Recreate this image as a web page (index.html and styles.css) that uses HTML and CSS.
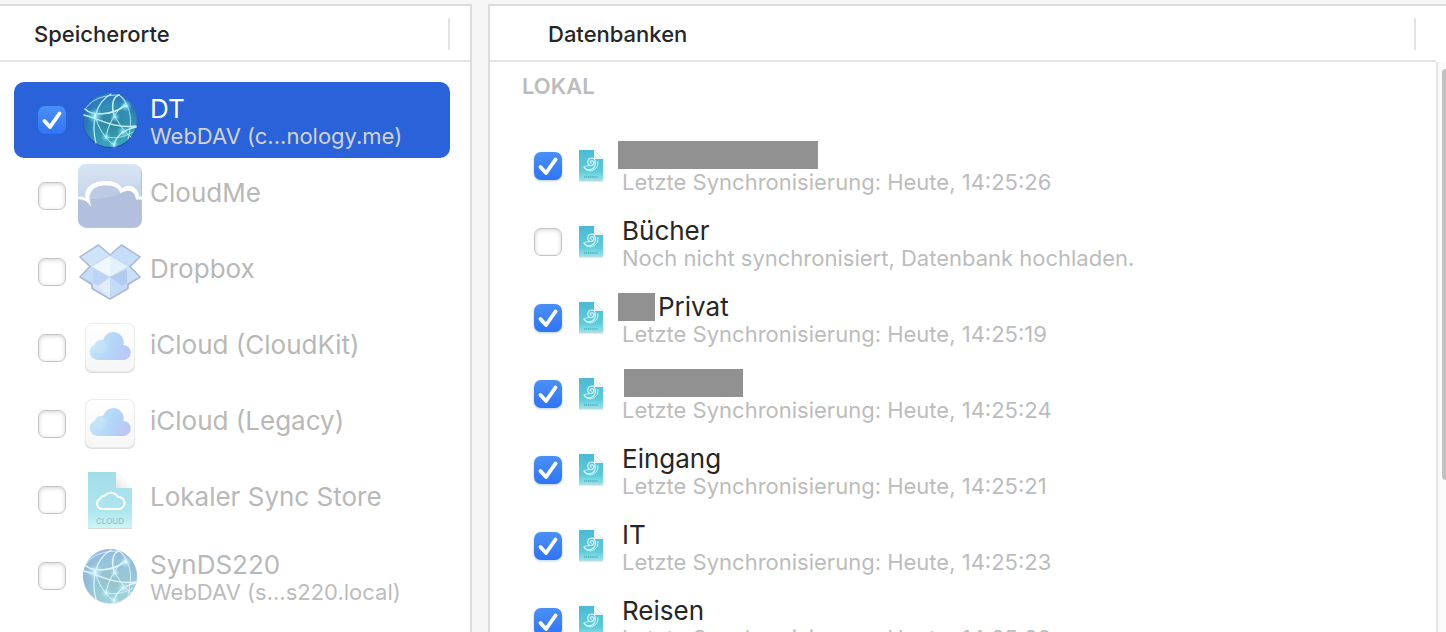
FILE: index.html
```
<!DOCTYPE html>
<html lang="de">
<head>
    <meta charset="UTF-8">
    <meta name="viewport" content="width=device-width, initial-scale=1.0">
    <title>Speicherorte</title>
    <link rel="stylesheet" href="styles.css">
</head>
<body>
    <svg class="defs" width="0" height="0" aria-hidden="true">
        <defs>
            <radialGradient id="ball" cx="55%" cy="60%" r="60%">
                <stop offset="0" stop-color="#2f8096"/>
                <stop offset="0.6" stop-color="#318fb4"/>
                <stop offset="1" stop-color="#2264ac"/>
            </radialGradient>
            <linearGradient id="ball-shade" x1="0" y1="0" x2="0.3" y2="1">
                <stop offset="0" stop-color="#2f7fe0" stop-opacity="0.7"/>
                <stop offset="0.5" stop-color="#3aa0c8" stop-opacity="0"/>
                <stop offset="1" stop-color="#48c4bc" stop-opacity="0.4"/>
            </linearGradient>
            <radialGradient id="glow">
                <stop offset="0" stop-color="#f2fdff" stop-opacity="1"/>
                <stop offset="0.35" stop-color="#8fe6ff" stop-opacity="0.6"/>
                <stop offset="1" stop-color="#6fd8ff" stop-opacity="0"/>
            </radialGradient>
            <linearGradient id="sky" x1="0" y1="0" x2="0" y2="1">
                <stop offset="0" stop-color="#d7e4f3"/>
                <stop offset="1" stop-color="#b5c7e2"/>
            </linearGradient>
            <linearGradient id="cloud-fill" x1="0" y1="0" x2="1" y2="0.3">
                <stop offset="0" stop-color="#c8ebf8"/>
                <stop offset="0.6" stop-color="#b3d7f8"/>
                <stop offset="1" stop-color="#b9c8f6"/>
            </linearGradient>
            <linearGradient id="tile" x1="0" y1="0" x2="0" y2="1">
                <stop offset="0" stop-color="#ffffff"/>
                <stop offset="1" stop-color="#f6f6f6"/>
            </linearGradient>
            <linearGradient id="store-fill" x1="0" y1="0" x2="0" y2="1">
                <stop offset="0" stop-color="#a4dbe9"/>
                <stop offset="0.7" stop-color="#aee6ee"/>
                <stop offset="1" stop-color="#cdf5f6"/>
            </linearGradient>
            <linearGradient id="db-fill" x1="0" y1="0" x2="0" y2="1">
                <stop offset="0" stop-color="#4cb9d5"/>
                <stop offset="0.7" stop-color="#5ccbdc"/>
                <stop offset="1" stop-color="#93e6ea"/>
            </linearGradient>
            <linearGradient id="fold" x1="0" y1="1" x2="1" y2="0">
                <stop offset="0" stop-color="#e4e4e4"/>
                <stop offset="0.5" stop-color="#fbfbfb"/>
            </linearGradient>

            <symbol id="globe" viewBox="0 0 64 64">
                <circle cx="32" cy="33" r="27" fill="#000" opacity="0.25"/>
                <circle cx="32" cy="32" r="27" fill="url(#ball)"/>
                <circle cx="32" cy="32" r="27" fill="url(#ball-shade)"/>
                <g fill="none" stroke="#c4f2fb" stroke-linecap="round">
                    <path d="M7 21C14 28 34 28 48 17" stroke-width="1.6"/>
                    <path d="M6 27C22 31 36 41 58 38" stroke-width="1.4"/>
                    <path d="M33 6C17 15 13 36 18 55" stroke-width="1.2"/>
                    <path d="M17 27C20 40 27 51 37 58" stroke-width="1"/>
                    <path d="M48 15C38 22 29 38 28 50" stroke-width="1"/>
                    <path d="M37 29C42 36 44 42 53 49" stroke-width="1"/>
                    <path d="M37 29C33 20 34 9 41 7" stroke-width="1.5"/>
                    <path d="M41 7C53 18 55 32 50 51" stroke-width="0.8"/>
                    <path d="M58 39C45 42 37 49 36 58" stroke-width="1.6"/>
                    <path d="M8 20C15 10 27 7 41 7" stroke-width="0.8"/>
                    <path d="M28 49C38 51 47 49 55 44" stroke-width="0.8"/>
                    <path d="M41 7C45 9 48 13 49 19" stroke-width="0.8"/>
                </g>
                <circle cx="17" cy="28" r="8" fill="url(#glow)"/>
                <circle cx="37" cy="29" r="5" fill="url(#glow)"/>
                <circle cx="48" cy="18" r="6" fill="url(#glow)"/>
                <circle cx="45" cy="44" r="6" fill="url(#glow)"/>
                <circle cx="28" cy="49" r="5" fill="url(#glow)"/>
                <circle cx="36" cy="56" r="5" fill="url(#glow)"/>
            </symbol>

            <symbol id="cloudme" viewBox="0 0 64 64">
                <rect x="1" y="1" width="63" height="63" rx="8" fill="#c4c4c8"/>
                <rect width="63" height="63" rx="8" fill="url(#sky)"/>
                <path d="M0 36C6 36 10 38 13 42C11 22 20 18 28 18C36 18 41 21 43 27C50 21 58 25 59 34L63 34V55Q63 63 55 63H8Q0 63 0 55Z" fill="#b2c0de"/>
                <path d="M9 35Q37 37 63 18V34L59 34C58 25 50 21 43 27C41 21 36 18 28 18C16 18 8 24 9 35Z" fill="#c5d4ea" opacity="0.5"/>
                <path d="M0 35C6 35 9 37 13.500 43C12 38 10.500 34 12 30C14 24 20 21.500 28 21.500C36 21.500 41 24 42.500 29.500C50 24 57 27 58 35.500H64V32.500H61C60 22 50 19 44 24.500C41 19 36 17 28 17C15 17 6 23 7.500 34C5.500 33 3 32.500 0 33Z" fill="#fff"/>
            </symbol>

            <symbol id="dropbox" viewBox="0 0 64 64">
                <path d="M20.500 5L32 15L43.500 5L62 17L52 26.500L62 37L50 44.500V48.500L32 59L14 48.500V44.500L2 37L12 26.500L2 17Z" fill="#c2dbf6" stroke="#a6b7d6" stroke-width="1.600" stroke-linejoin="round"/>
                <path d="M20.500 6L31 15L13 26L3 17Z" fill="#cfe3f9"/>
                <path d="M43.500 6L33 15L51 26L61 17Z" fill="#c6ddf7"/>
                <path d="M13 27L31 37L20 45L3 37Z" fill="#c4dcf8"/>
                <path d="M51 27L33 37L44 45L61 37Z" fill="#cbdff7"/>
                <path d="M32 16L50 26.500L32 37Z" fill="#e4f0fc"/>
                <path d="M32 16L14 26.500L32 37Z" fill="#f0f7fe"/>
                <path d="M15 29L32 37V58L15 48Z" fill="#d4e5fa"/>
                <path d="M49 29L32 37V58L49 48Z" fill="#c5daf6"/>
                <path d="M15 29L32 37L20 46L15 43Z" fill="#bcd4f5"/>
                <path d="M49 29L32 37L44 46L49 43Z" fill="#b1cbf1"/>
                <path d="M32 38L20 46L32 58Z" fill="#e2eefc"/>
            </symbol>

            <symbol id="icloud" viewBox="0 0 64 64">
                <rect x="7" y="8" width="50" height="49" rx="7" fill="#dcdcdc"/>
                <rect x="7.500" y="7.500" width="49" height="48" rx="7" fill="url(#tile)" stroke="#ebebeb"/>
                <path d="M20 44A8 8 0 0 1 17 28.500A7 7 0 0 1 25 24A10.500 10.500 0 0 1 45.500 29A7.500 7.500 0 0 1 45 44Z" fill="url(#cloud-fill)"/>
                <circle cx="22" cy="31" r="7" fill="#d4f0fa" opacity="0.3"/>
            </symbol>

            <symbol id="store" viewBox="0 0 64 64">
                <path d="M10 6H38L54 22V61H10Z" fill="#d9dcdd"/>
                <path d="M10 4H38L54 20V58Q54 60 52 60H12Q10 60 10 58Z" fill="url(#store-fill)"/>
                <path d="M38 4L54 20H38Z" fill="url(#fold)"/>
                <path d="M24 41A5.500 5.500 0 0 1 22.500 30.500A5 5 0 0 1 27 27.500A8 8 0 0 1 40 29A6 6 0 0 1 41 41Z" fill="none" stroke="#fff" stroke-width="2" stroke-linejoin="round"/>
                <text x="32" y="55.500" text-anchor="middle" class="store-text">CLOUD</text>
            </symbol>

            <symbol id="database" viewBox="0 0 24 32">
                <path d="M0 1H15L24 9V31.500H0Z" fill="#cdd5d7"/>
                <path d="M0 0H15L24 9V29.500Q24 30.500 23 30.500H1Q0 30.500 0 29.500Z" fill="url(#db-fill)"/>
                <path d="M15 0L24 9H15Z" fill="url(#fold)"/>
                <g fill="none" stroke="#dff8fb" stroke-linecap="round">
                    <path d="M5 17C6 19.500 9.500 20.500 12 19.500C18 17.500 17.500 8 12.500 8C8 8.500 7.500 14.500 11.500 15.500C15 16 16 11 13 10.500C11 10.500 10.800 13 12.500 13" stroke-width="1.200"/>
                    <path d="M5 17C7 15.500 8.500 16 11.500 15.500" stroke-width="0.800"/>
                    <path d="M7 19.500C12 23.500 20 19 19 11.500" stroke-width="0.900"/>
                </g>
                <path d="M5 27H19" stroke="#4499a6" stroke-width="1.500" stroke-dasharray="1.500 0.500" opacity="0.6"/>
            </symbol>
        </defs>
    </svg>

    <div class="container">
        <section class="panel locations">
            <header class="header">
                <h2>Speicherorte</h2>
                <div class="divider"></div>
            </header>
            <div class="list">
                <label class="row selected">
                    <input type="checkbox" checked>
                    <svg class="icon"><use href="#globe"/></svg>
                    <span class="text">
                        <span class="name">DT</span>
                        <span class="info">WebDAV (c...nology.me)</span>
                    </span>
                </label>
                <label class="row single">
                    <input type="checkbox">
                    <svg class="icon"><use href="#cloudme"/></svg>
                    <span class="text"><span class="name">CloudMe</span></span>
                </label>
                <label class="row single">
                    <input type="checkbox">
                    <svg class="icon"><use href="#dropbox"/></svg>
                    <span class="text"><span class="name">Dropbox</span></span>
                </label>
                <label class="row single">
                    <input type="checkbox">
                    <svg class="icon"><use href="#icloud"/></svg>
                    <span class="text"><span class="name">iCloud (CloudKit)</span></span>
                </label>
                <label class="row single">
                    <input type="checkbox">
                    <svg class="icon"><use href="#icloud"/></svg>
                    <span class="text"><span class="name">iCloud (Legacy)</span></span>
                </label>
                <label class="row single">
                    <input type="checkbox">
                    <svg class="icon"><use href="#store"/></svg>
                    <span class="text"><span class="name">Lokaler Sync Store</span></span>
                </label>
                <label class="row">
                    <input type="checkbox">
                    <svg class="icon faded"><use href="#globe"/></svg>
                    <span class="text">
                        <span class="name">SynDS220</span>
                        <span class="info">WebDAV (s...s220.local)</span>
                    </span>
                </label>
            </div>
        </section>

        <section class="panel databases">
            <header class="header">
                <h2>Datenbanken</h2>
                <div class="divider"></div>
            </header>
            <div class="scroll-area">
                <div class="list">
                    <h3>LOKAL</h3>
                    <label class="row">
                        <input type="checkbox" checked>
                        <svg class="icon"><use href="#database"/></svg>
                        <span class="text">
                            <span class="name"><span class="redacted long"></span></span>
                            <span class="info">Letzte Synchronisierung: Heute, 14:25:26</span>
                        </span>
                    </label>
                    <label class="row">
                        <input type="checkbox">
                        <svg class="icon"><use href="#database"/></svg>
                        <span class="text">
                            <span class="name">Bücher</span>
                            <span class="info">Noch nicht synchronisiert, Datenbank hochladen.</span>
                        </span>
                    </label>
                    <label class="row">
                        <input type="checkbox" checked>
                        <svg class="icon"><use href="#database"/></svg>
                        <span class="text">
                            <span class="name"><span class="redacted short"></span>Privat</span>
                            <span class="info">Letzte Synchronisierung: Heute, 14:25:19</span>
                        </span>
                    </label>
                    <label class="row">
                        <input type="checkbox" checked>
                        <svg class="icon"><use href="#database"/></svg>
                        <span class="text">
                            <span class="name"><span class="redacted medium"></span></span>
                            <span class="info">Letzte Synchronisierung: Heute, 14:25:24</span>
                        </span>
                    </label>
                    <label class="row">
                        <input type="checkbox" checked>
                        <svg class="icon"><use href="#database"/></svg>
                        <span class="text">
                            <span class="name">Eingang</span>
                            <span class="info">Letzte Synchronisierung: Heute, 14:25:21</span>
                        </span>
                    </label>
                    <label class="row">
                        <input type="checkbox" checked>
                        <svg class="icon"><use href="#database"/></svg>
                        <span class="text">
                            <span class="name">IT</span>
                            <span class="info">Letzte Synchronisierung: Heute, 14:25:23</span>
                        </span>
                    </label>
                    <label class="row">
                        <input type="checkbox" checked>
                        <svg class="icon"><use href="#database"/></svg>
                        <span class="text">
                            <span class="name">Reisen</span>
                            <span class="info">Letzte Synchronisierung: Heute, 14:25:22</span>
                        </span>
                    </label>
                </div>
                <div class="track">
                    <div class="thumb"></div>
                </div>
            </div>
        </section>
    </div>
</body>
</html>
```
FILE: styles.css
```
* {
    box-sizing: border-box;
}

body , html {
    height: 100%;
    margin: 0;
    padding: 0;
}

body {
    background-color: #f5f5f5;
    color: #262626;
    font-family: Inter, "Liberation Sans", sans-serif;
    overflow: hidden;
}

.defs {
    position: absolute;
}

.container {
    display: flex;
    gap: 16px;
    height: 100%;
    padding-top: 4px;
}

.panel {
    display: flex;
    flex-direction: column;
    background-color: white;
    border-top: 2px solid #dcdcdc;
    overflow: hidden;
}

.locations {
    width: 472px;
    flex-shrink: 0;
    border-right: 2px solid #dcdcdc;
}

.databases {
    flex: 1;
    border-left: 2px solid #dcdcdc;
}

.header {
    display: flex;
    flex-shrink: 0;
    align-items: center;
    justify-content: space-between;
    height: 54px;
    padding: 2px 20px 0 34px;
}

.databases .header {
    padding: 2px 30px 0 58px;
}

h2 {
    margin: 0;
    font-size: 22px;
    font-weight: 500;
    line-height: 28px;
}

h3 {
    height: 66px;
    margin: 0;
    padding: 10px 0 0 32px;
    color: #bcbcbc;
    font-size: 22px;
    font-weight: 600;
    line-height: 28px;
}

.divider {
    width: 2px;
    height: 32px;
    background-color: #e3e3e3;
}

.list {
    flex: 1;
    border-top: 2px solid #e3e3e3;
    overflow: hidden;
}

.locations .list {
    padding: 20px 20px 0 14px;
}

.scroll-area {
    display: flex;
    flex: 1;
    min-height: 0;
}

.row {
    display: flex;
    align-items: center;
    height: 76px;
    padding-left: 24px;
    border-radius: 10px;
}

.databases .row {
    padding-left: 44px;
}

.text {
    display: flex;
    flex-direction: column;
    padding-top: 4px;
    white-space: nowrap;
}

.name {
    display: flex;
    height: 28px;
    font-size: 26px;
    line-height: 28px;
}

.info {
    color: #bcbcbc;
    font-size: 22px;
    line-height: 26px;
}

.locations .text {
    color: #b8b8b8;
}

.single .text {
    padding: 0 0 6px;
}

.selected {
    background-color: #2962d9;
}

.locations .selected .name {
    color: white;
}

.selected .info {
    color: #d2d2d2;
}

.icon {
    width: 64px;
    height: 64px;
    margin: 0 8px 0 12px;
    flex-shrink: 0;
}

.databases .icon {
    width: 24px;
    height: 32px;
    margin: 0 19px 0 17px;
}

.faded {
    opacity: 0.5;
}

.store-text {
    fill: #8fc3ce;
    font-size: 8px;
    font-weight: 500;
}

input {
    appearance: none;
    width: 28px;
    height: 28px;
    margin: 0;
    flex-shrink: 0;
    background-color: white;
    border: 1px solid #c4c4c4;
    border-radius: 7px;
    box-shadow: inset 0 1px 4px #d2d2d2;
}

input:checked {
    border: 0;
    background-image: url("data:image/svg+xml,%3Csvg xmlns='http://www.w3.org/2000/svg' viewBox='0 0 28 28'%3E%3Cpath d='M6.500 15L12 21L21.500 7.500' fill='none' stroke='white' stroke-width='3.900' stroke-linecap='round' stroke-linejoin='round'/%3E%3C/svg%3E"), linear-gradient(#4a90f8, #2f74f5);
    box-shadow: 0 1px 3px #b9d0f5;
}

.selected input:checked {
    box-shadow: none;
}

/* covered names */
.redacted {
    height: 28px;
    margin-left: -4px;
    background-color: #919191;
}

.long {
    width: 200px;
}

.short {
    width: 37px;
    margin-right: 3px;
}

.medium {
    width: 119px;
    margin-left: 2px;
}

.track {
    width: 10px;
    margin-top: 2px;
    padding: 7px 0 0 4px;
    background-color: #fafafa;
    border-left: 2px solid #e6e6e6;
}

.thumb {
    height: 73%;
    background-color: #c1c1c1;
    border-radius: 6px 0 0 6px;
}
```
